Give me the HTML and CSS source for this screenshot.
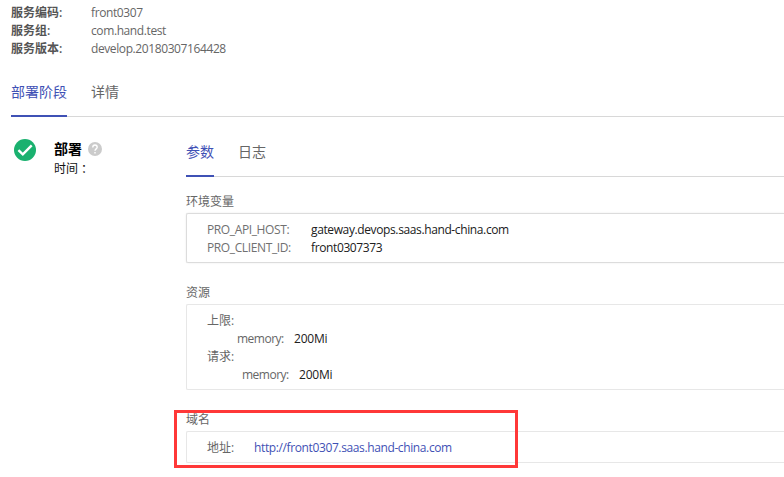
FILE: index.html
```html
<!DOCTYPE html>
<html lang="zh-CN">
<head>
<meta charset="utf-8">
<title>部署</title>
<link rel="stylesheet" href="styles.css">
</head>
<body>
<dl class="summary">
  <dt>服务编码:</dt><dd>front0307</dd>
  <dt>服务组:</dt><dd>com.hand.test</dd>
  <dt>服务版本:</dt><dd>develop.20180307164428</dd>
</dl>
<nav class="tabs main-tabs"><a class="tab active">部署阶段</a><a class="tab">详情</a></nav>
<main class="stage">
  <aside class="status">
    <svg class="done" viewBox="0 0 22 22"><circle cx="11" cy="11" r="11" fill="#1ab16f"/><path d="M4.4 11.2l4.4 4.2 8.9-9" fill="none" stroke="#fff" stroke-width="2.4"/></svg>
    <div class="status-text">
      <h1>部署<svg class="help" viewBox="0 0 14 14"><circle cx="7" cy="7" r="7" fill="#cbcbcb"/><path d="M4.8 5.5c0-1.5.9-2.5 2.2-2.5s2.2.9 2.2 2.2c0 1.6-2.2 1.8-2.2 3.6" fill="none" stroke="#fff" stroke-width="1.4"/><path d="M6.3 10h1.4v1.4H6.3z" fill="#fff"/></svg></h1>
      <p>时间<span class="colon" lang="zh-TW">：</span></p>
    </div>
  </aside>
  <div class="detail">
    <nav class="tabs sub-tabs"><a class="tab active">参数</a><a class="tab">日志</a></nav>
    <section class="env">
      <h2>环境变量</h2>
      <div class="box raised">
        <div class="row"><span class="key">PRO_API_HOST:</span><span class="value">gateway.devops.saas.hand-china.com</span></div>
        <div class="row"><span class="key">PRO_CLIENT_ID:</span><span class="value">front0307373</span></div>
      </div>
    </section>
    <section class="resource">
      <h2>资源</h2>
      <div class="box">
        <div class="row label">上限:</div>
        <div class="row limit"><span class="memory">memory:</span><span class="value amount">200Mi</span></div>
        <div class="row label">请求:</div>
        <div class="row request"><span class="memory">memory:</span><span class="value amount">200Mi</span></div>
      </div>
    </section>
    <section class="domain">
      <h2>域名</h2>
      <div class="box">
        <div class="row"><span class="address label">地址:</span><a class="url">http://front0307.saas.hand-china.com</a></div>
      </div>
      <div class="highlight"></div>
    </section>
  </div>
</main>
</body>
</html>
```

FILE: styles.css
```css
* { box-sizing: border-box; }
body {
  margin: 0;
  width: 784px;
  height: 477px;
  overflow: hidden;
  background: #fff;
  color: #666;
  font: 12px/18px "Open Sans", "Noto Sans CJK SC", sans-serif;
}
h1, h2, p, dl, dt, dd { margin: 0; }
.summary {
  display: grid;
  grid-template-columns: 80px 1fr;
  grid-auto-rows: 18px;
  padding: 4px 0 0 11px;
}
.summary dt { font-weight: 600; color: #555; }
.summary dd { letter-spacing: -0.4px; }
.tabs {
  display: flex;
  gap: 24px;
  border-bottom: 1px solid #d8d8d8;
  font-size: 14px;
}
.tab {
  height: 36px;
  margin-bottom: -1px;
  border-bottom: 2px solid transparent;
  line-height: 22px;
}
.tab.active { color: #3f51b5; border-color: #3f51b5; }
.main-tabs { margin: 23px 0 0 11px; }
.stage { display: flex; }
.status { display: flex; width: 186px; padding: 22px 0 0 14px; }
.done { width: 22px; height: 22px; margin-right: 18px; }
.status-text { color: #111; }
.status-text p { line-height: 19px; }
.colon { font-family: "Noto Sans CJK TC", sans-serif; vertical-align: -1px; line-height: 1; }
h1 {
  display: flex;
  align-items: center;
  gap: 6px;
  height: 20px;
  font-size: 14px;
  color: #000;
}
.help { width: 14px; height: 14px; }
.detail { flex: 1; }
.sub-tabs { margin-top: 24px; }
h2 { height: 21px; font-size: 12px; font-weight: 400; line-height: 20px; }
.box {
  border: 1px solid #e7e7e7;
  border-right: 0;
  border-radius: 2px 0 0 2px;
  padding: 7px 0 6px 20px;
}
.raised { height: 50px; border-color: #dcdcdc; box-shadow: 0 0 2px #e8e8e8; }
.env { padding-top: 15px; }
.resource { padding-top: 20px; }
.resource .box { height: 86px; }
.domain { position: relative; padding-top: 20px; }
.domain .box { height: 32px; }
.row { display: flex; height: 18px; white-space: nowrap; letter-spacing: -0.38px; }
.label { letter-spacing: 0; }
.key { width: 104px; color: #707070; }
.value { color: #202020; }
.amount { letter-spacing: -0.2px; }
.limit { padding-left: 30px; }
.request { padding-left: 35px; }
.memory { width: 57px; letter-spacing: -0.5px; }
.address { width: 47px; }
.url { color: #3f51b5; }
.highlight {
  position: absolute;
  left: -12px;
  top: 20px;
  width: 344px;
  height: 58px;
  border: 3px solid #ff3838;
}
```
